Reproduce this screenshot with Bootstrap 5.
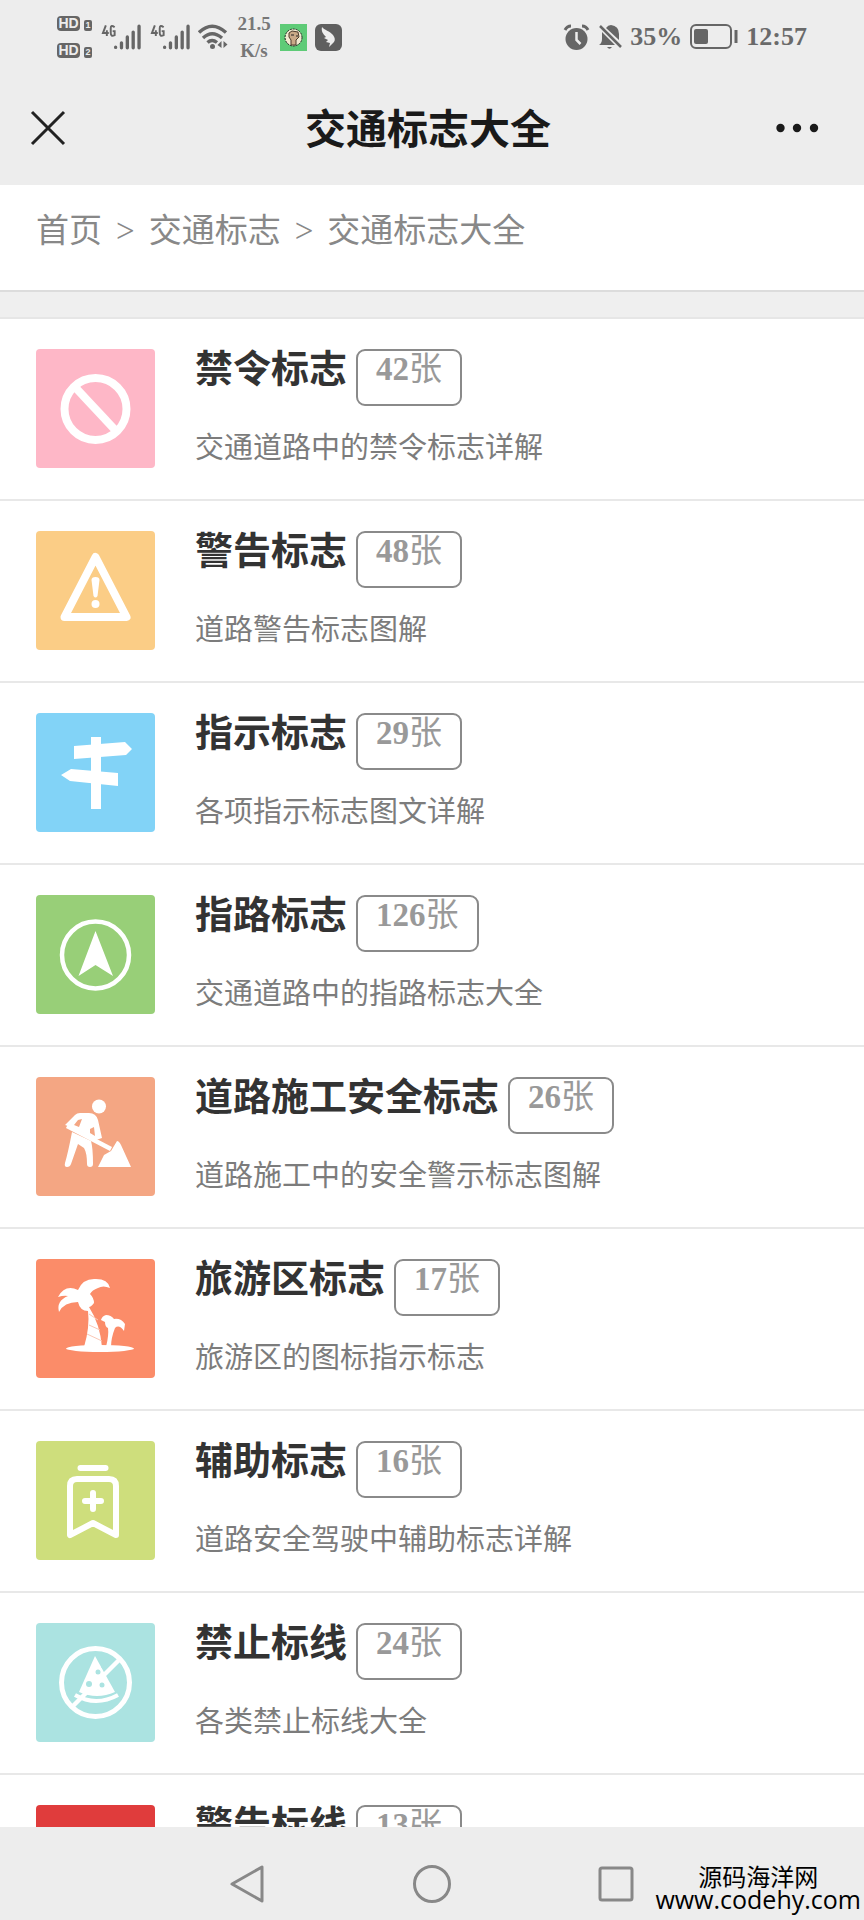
<!DOCTYPE html>
<html lang="zh-CN">
<head>
<meta charset="utf-8">
<meta name="viewport" content="width=device-width, initial-scale=1">
<title>交通标志大全</title>
<link href="https://cdn.jsdelivr.net/npm/bootstrap@5.3.0/dist/css/bootstrap.min.css" rel="stylesheet">
<style>
  body { font-family: "Liberation Serif", "Noto Sans CJK SC", sans-serif; background: #fff; color: #777; }
  .chrome { background: #ededed; }
  .status-bar { height: 74px; padding: 0 57px; color: #666; }
  .status-bar svg { display: block; flex: none; }
  .hd-stack { gap: 12px; }
  .hd-chip { font: bold 14px/15px "Liberation Sans", sans-serif; width: 23px; height: 15px; background: #666; color: #ededed; border-radius: 4px; text-align: center; }
  .sim-chip { font: bold 9px/11px "Liberation Sans", sans-serif; width: 8px; height: 11px; background: #666; color: #ededed; border-radius: 2px; text-align: center; }
  .net-rate { font-weight: bold; font-size: 19px; line-height: 27px; width: 36px; text-align: center; color: #777; }
  .status-text { font-weight: bold; font-size: 26px; line-height: 30px; color: #6a6a6a; }
  .title-bar { height: 111px; padding: 0 28px 3px; }
  .title-bar h1 { font-size: 41px; line-height: 48px; color: #1a1a1a; padding-top: 4px; }
  .bare-btn { background: none; border: 0; padding: 0; line-height: 0; }
  .crumbs { height: 107px; padding: 22px 36px 0; line-height: 48px; border-bottom: 2px solid #dcdcdc; }
  .crumbs ol { --bs-breadcrumb-divider: ">"; --bs-breadcrumb-item-padding-x: 14px; --bs-breadcrumb-divider-color: #888; font-size: 33px; }
  .crumbs a, .crumbs .active { color: #888; text-decoration: none; }
  .spacer-band { height: 27px; background: #efefef; border-bottom: 2px solid #e6e6e6; flex: none; }
  .sign-list { scrollbar-width: none; min-height: 0; }
  .sign-list::-webkit-scrollbar { display: none; }
  .sign-row { height: 182px; padding: 30px 36px 0; gap: 40px; border-bottom: 2px solid #e8e8e8; text-decoration: none; color: #777; }
  .tile { width: 119px; height: 119px; border-radius: 4px; flex: none; overflow: hidden; }
  .tile svg { display: block; }
  .head-line { gap: 9px; }
  .sign-name { font-size: 38px; line-height: 40px; font-weight: bold; color: #333; margin: 0; }
  .count { height: 57px; padding: 0 18px; border: 2px solid #8a8a8a; border-radius: 9px; font-size: 33px; line-height: 36px; color: #999; }
  .desc { font-size: 29px; line-height: 36px; margin: 24px 0 0; color: #7c7c7c; }
  .nav-keys { height: 93px; padding-top: 21px; }
  .key-row { gap: 144px; }
  .watermark { right: 3px; bottom: 9px; font-family: "Open Sans", "Noto Sans CJK SC", sans-serif; font-size: 24px; line-height: 23px; color: #000; }
  .watermark .site { font-size: 25px; }
</style>
</head>
<body>
<div class="d-flex flex-column vh-100 position-relative overflow-hidden">
  <header class="chrome flex-shrink-0">
    <div class="status-bar d-flex align-items-center justify-content-between">
      <div class="d-flex align-items-center">
        <div class="hd-stack d-flex flex-column me-2">
          <div class="d-flex align-items-end gap-1"><span class="hd-chip">HD</span><span class="sim-chip">1</span></div>
          <div class="d-flex align-items-end gap-1"><span class="hd-chip">HD</span><span class="sim-chip">2</span></div>
        </div>
        <svg width="41" height="28" viewBox="0 0 42 28" class="me-2" fill="none" stroke="#666" role="img" aria-label="4G"><path d="M6 2 3 10h6M7 7v6M15 4q-4-3-4 1v5q0 4 4 2V8h-2" stroke-width="2"/><g stroke-width="3.4" stroke-linecap="round"><path d="M16 24.500v.2M22 20v5M28 14v11M34 9v16M40 3v22"/></g></svg>
        <svg width="41" height="28" viewBox="0 0 42 28" class="me-2" fill="none" stroke="#666" role="img" aria-label="4G"><path d="M6 2 3 10h6M7 7v6M15 4q-4-3-4 1v5q0 4 4 2V8h-2" stroke-width="2"/><g stroke-width="3.4" stroke-linecap="round"><path d="M16 24.500v.2M22 20v5M28 14v11M34 9v16M40 3v22"/></g></svg>
        <svg width="30" height="28" viewBox="0 0 30 28" class="me-2" fill="none" stroke="#666" stroke-width="3.400"><path d="M1 9.500Q14 -3 28 9.500M5 15Q14 6.500 24 15M9.500 19.500Q14 15.500 19 19.500"/><circle cx="14.500" cy="23.500" r="2.500" fill="#666" stroke="none"/><path d="M23.500 18v7l-4-3zM25.500 18v7l4-3.500z" fill="#666" stroke="none"/></svg>
        <div class="net-rate">21.5<br>K/s</div>
        <svg width="27" height="27" viewBox="0 0 27 27" class="ms-2"><path fill="#5ecb77" d="M0 0h27v27H0z"/><circle cx="13.500" cy="13.500" r="8.500" fill="#f2ead0" stroke="#222" stroke-width="1" stroke-dasharray="2 1"/><path d="M9 9l3-2 6 1 1 5-3 3v5h-5v-5l-2-3z" fill="#c9a987" stroke="#4c3b2c"/><path d="M11 11h3m2 1h2" stroke="#222"/></svg>
        <svg width="27" height="27" viewBox="0 0 27 27" class="ms-2"><rect width="27" height="27" rx="6" fill="#5f5f5f"/><path d="M7 3c2 3 8 4 11 8q3 4 1 7l-5 5 1-4-4-1 2-2-4-2 2-1C8 10 6 7 7 3z" fill="#ededed"/></svg>
      </div>
      <div class="d-flex align-items-center gap-2">
        <svg width="27" height="27" viewBox="0 0 27 27"><circle cx="13.500" cy="15" r="11" fill="#666"/><path d="M2 6q2-4 6-4M25 6q-2-4-6-4" stroke="#666" stroke-width="3" fill="none"/><path d="M13.500 8v8l4 4" stroke="#ededed" stroke-width="2.500" fill="none"/></svg>
        <svg width="24" height="27" viewBox="0 0 24 27"><path d="M1 21q3-2 3-6V8l13 13zM8 4q2-3 5-3 8 1 8 9v6zM9 23h5q-2.500 3.500-5 0z" fill="#666"/><path d="M2 2l21 21" stroke="#666" stroke-width="2.500"/></svg>
        <span class="status-text">35%</span>
        <svg width="48" height="26" viewBox="0 0 48 26"><rect x="1" y="1" width="40" height="23" rx="5" fill="none" stroke="#666" stroke-width="2"/><rect x="4" y="5" width="14" height="15" rx="2" fill="#666"/><path d="M46 6v13" stroke="#666" stroke-width="3"/></svg>
        <time class="status-text">12:57</time>
      </div>
    </div>
    <div class="title-bar d-flex align-items-center justify-content-between">
      <button class="bare-btn" type="button" aria-label="关闭"><svg width="52" height="40" viewBox="0 0 52 40"><path d="M4 4l32 32M36 4 4 36" stroke="#222" stroke-width="3"/></svg></button>
      <h1 class="m-0 fw-bold">交通标志大全</h1>
      <button class="bare-btn" type="button" aria-label="更多"><svg width="60" height="40" viewBox="0 0 60 40" fill="#1a1a1a"><circle cx="4.500" cy="20" r="4.200"/><circle cx="21" cy="20" r="4.200"/><circle cx="38" cy="20" r="4.200"/></svg></button>
    </div>
  </header>

  <nav class="crumbs flex-shrink-0" aria-label="breadcrumb">
    <ol class="breadcrumb m-0">
      <li class="breadcrumb-item"><a href="#">首页</a></li>
      <li class="breadcrumb-item"><a href="#">交通标志</a></li>
      <li class="breadcrumb-item active" aria-current="page">交通标志大全</li>
    </ol>
  </nav>
  <div class="spacer-band"></div>

  <main class="sign-list flex-grow-1 overflow-auto">
    <a href="#" class="sign-row d-flex align-items-start">
      <span class="tile" style="background:#feb7c7"><svg width="119" height="119" viewBox="0 0 119 119" fill="none" stroke="#fff" stroke-width="8"><circle cx="59.500" cy="60" r="31"/><path d="M38 37l43 46"/></svg></span>
      <div><div class="head-line d-flex align-items-start"><h2 class="sign-name">禁令标志</h2><span class="count"><b>42</b>张</span></div><p class="desc">交通道路中的禁令标志详解</p></div>
    </a>
    <a href="#" class="sign-row d-flex align-items-start">
      <span class="tile" style="background:#fbcd86"><svg width="119" height="119" viewBox="0 0 119 119" fill="#fff"><path d="M59.500 26 90.500 86h-62z" fill="none" stroke="#fff" stroke-width="8" stroke-linejoin="round"/><path d="M55.500 49q0-3 4-3t4 3l-2 16q-2 3-4 0z"/><circle cx="59.500" cy="73" r="4"/></svg></span>
      <div><div class="head-line d-flex align-items-start"><h2 class="sign-name">警告标志</h2><span class="count"><b>48</b>张</span></div><p class="desc">道路警告标志图解</p></div>
    </a>
    <a href="#" class="sign-row d-flex align-items-start">
      <span class="tile" style="background:#82d3f7"><svg width="119" height="119" viewBox="0 0 119 119" fill="#fff"><path d="M55 24h10v72H55z"/><path d="M38 33l51-4 7 7-6 6-52 4zM25 62l10-6 47 4v13l-48-5z"/></svg></span>
      <div><div class="head-line d-flex align-items-start"><h2 class="sign-name">指示标志</h2><span class="count"><b>29</b>张</span></div><p class="desc">各项指示标志图文详解</p></div>
    </a>
    <a href="#" class="sign-row d-flex align-items-start">
      <span class="tile" style="background:#98cf78"><svg width="119" height="119" viewBox="0 0 119 119" fill="#fff"><circle cx="59.500" cy="60" r="33.500" fill="none" stroke="#fff" stroke-width="4.500"/><path d="M59.500 36 77 81 59.500 70 42.500 81z"/></svg></span>
      <div><div class="head-line d-flex align-items-start"><h2 class="sign-name">指路标志</h2><span class="count"><b>126</b>张</span></div><p class="desc">交通道路中的指路标志大全</p></div>
    </a>
    <a href="#" class="sign-row d-flex align-items-start">
      <span class="tile" style="background:#f4a683"><svg width="119" height="119" viewBox="0 0 119 119" fill="#fff"><circle cx="63" cy="29.500" r="7"/><path d="M29 48 39 38q2-2 5-2h9q7 0 9 7l4 18-6 2-16-9-6-3z"/><path d="M38 48l5 2 3-8-4 1zM54 52v4l5 3-1-9z" fill="#f4a683"/><path d="M31 49l44 23" stroke="#fff" stroke-width="4.500"/><path d="M36 55l19 9q2 7 2 23 0 3-3 3t-3-3q0-11-3-16l-6-4-7 20q-1 3-4 3t-2-4q3-10 7-31zM81 64q2 0 4 4l10 22H62l6-12 7-4z"/></svg></span>
      <div><div class="head-line d-flex align-items-start"><h2 class="sign-name">道路施工安全标志</h2><span class="count"><b>26</b>张</span></div><p class="desc">道路施工中的安全警示标志图解</p></div>
    </a>
    <a href="#" class="sign-row d-flex align-items-start">
      <span class="tile" style="background:#fb8c69"><svg width="119" height="119" viewBox="0 0 119 119" fill="#fff"><path d="M42 31q5-12 18-11 12 0 14 9-7-3-12 0-6 2-8 6 4 4 4 9-3 4-5 4 11 17 13 40H48q6-20 4-36-8 0-10-9-14 0-19 10-3-11 9-16-4-1-10 1 7-13 20-7z"/><path d="M70 88q3-12 2-19-3-1-3-6l-4-2q1-4 5-5 5 0 8 4 7-1 11 5l-1 7q-5-7-9-3-4 10-4 19z"/><ellipse cx="64" cy="89.500" rx="34" ry="3.500"/><path d="M53 55l9 6M53 66l11 5M51 75l15 7" stroke="#fbc8b6" stroke-width="1"/></svg></span>
      <div><div class="head-line d-flex align-items-start"><h2 class="sign-name">旅游区标志</h2><span class="count"><b>17</b>张</span></div><p class="desc">旅游区的图标指示标志</p></div>
    </a>
    <a href="#" class="sign-row d-flex align-items-start">
      <span class="tile" style="background:#cede7c"><svg width="119" height="119" viewBox="0 0 119 119" fill="none" stroke="#fff" stroke-width="6"><path d="M44.500 27h25" stroke-linecap="round"/><path d="M34 94V45q0-7 7-7h32q7 0 7 7v49L57 82z" stroke-linejoin="round"/><path d="M49 60h16M57 52v16" stroke-linecap="round" stroke-width="6"/></svg></span>
      <div><div class="head-line d-flex align-items-start"><h2 class="sign-name">辅助标志</h2><span class="count"><b>16</b>张</span></div><p class="desc">道路安全驾驶中辅助标志详解</p></div>
    </a>
    <a href="#" class="sign-row d-flex align-items-start">
      <span class="tile" style="background:#abe3e1"><svg width="119" height="119" viewBox="0 0 119 119" fill="#fff"><path d="M59 33 79 69q-18 8-36 0z"/><path d="M39 72q21 12 43 0" fill="none" stroke="#fff" stroke-width="4"/><path d="M78 34 67 46" stroke="#abe3e1" stroke-width="5"/><path d="M84 36 37 83" stroke="#fff" stroke-width="4.500"/><g fill="#abe3e1"><circle cx="62" cy="49" r="2.500"/><circle cx="53" cy="61" r="3"/><circle cx="66" cy="62" r="2.500"/></g><circle cx="59.500" cy="59.500" r="34" fill="none" stroke="#fff" stroke-width="5"/></svg></span>
      <div><div class="head-line d-flex align-items-start"><h2 class="sign-name">禁止标线</h2><span class="count"><b>24</b>张</span></div><p class="desc">各类禁止标线大全</p></div>
    </a>
    <a href="#" class="sign-row d-flex align-items-start">
      <span class="tile" style="background:#e03c3c"></span>
      <div><div class="head-line d-flex align-items-start"><h2 class="sign-name">警告标线</h2><span class="count"><b>13</b>张</span></div></div>
    </a>
  </main>

  <footer class="chrome nav-keys d-flex align-items-center justify-content-center flex-shrink-0">
    <div class="key-row d-flex align-items-center justify-content-center">
      <button class="bare-btn" type="button" aria-label="返回"><svg width="40" height="40" viewBox="0 0 40 40" fill="none" stroke="#888" stroke-width="3" stroke-linejoin="round"><path d="M34 3v34L4 20z"/></svg></button>
      <button class="bare-btn" type="button" aria-label="主页"><svg width="40" height="40" viewBox="0 0 40 40" fill="none" stroke="#888" stroke-width="3"><circle cx="20" cy="20" r="17.500"/></svg></button>
      <button class="bare-btn" type="button" aria-label="最近任务"><svg width="40" height="40" viewBox="0 0 40 40" fill="none" stroke="#888" stroke-width="3"><rect x="4" y="4" width="32" height="32" rx="2"/></svg></button>
    </div>
  </footer>
  <div class="watermark position-absolute text-center"><div>源码海洋网</div><div class="site">www.codehy.com</div></div>
</div>
<script src="https://cdn.jsdelivr.net/npm/bootstrap@5.3.0/dist/js/bootstrap.bundle.min.js"></script>
</body>
</html>
